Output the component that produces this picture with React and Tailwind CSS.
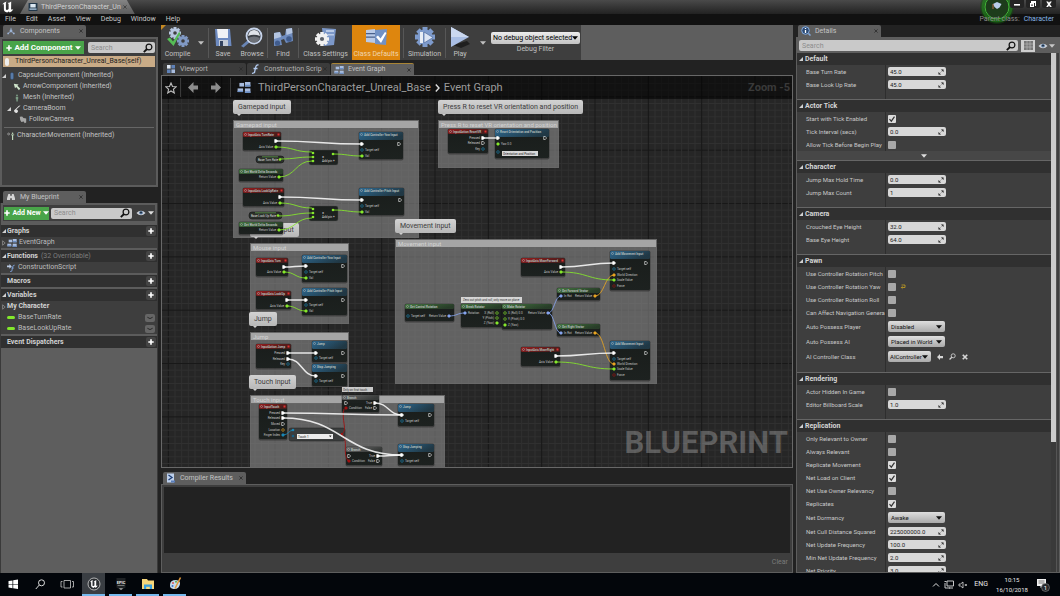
import React from 'react';
import clsx from 'clsx';

/* ---------- small shared bits ---------- */

const Caret = ({ className }) => (
  <svg viewBox="0 0 6 4" className={clsx('h-1 w-1.5 shrink-0', className)}>
    <path d="M0 0.3h6L3 3.7z" fill="currentColor" />
  </svg>
);

const Corner = () => (
  <svg viewBox="0 0 5 5" className="h-1 w-1 shrink-0 text-[#d0d0d0]">
    <path d="M5 0v5H0z" fill="currentColor" />
  </svg>
);

const Closed = () => (
  <svg viewBox="0 0 4 6" className="h-1.5 w-1 shrink-0">
    <path d="M0.6 0.8L3.2 3 0.6 5.2z" fill="none" stroke="#9a9a9a" strokeWidth="0.7" />
  </svg>
);

const Magnifier = ({ className, flip }) => (
  <svg viewBox="0 0 10 10" className={clsx('shrink-0', className || 'h-2.5 w-2.5')}>
    <g transform={flip ? 'translate(10 0) scale(-1 1)' : undefined}>
      <circle cx="4" cy="4" r="2.9" fill="none" stroke="currentColor" strokeWidth="1.2" />
      <path d="M6 6l3.2 3.2" stroke="currentColor" strokeWidth="1.8" />
    </g>
  </svg>
);

const Eye = () => (
  <svg viewBox="0 0 12 8" className="h-2 w-2.5 shrink-0">
    <path d="M0.5 4Q6-1.5 11.5 4 6 9.5 0.5 4z" fill="#cfd3da" />
    <circle cx="6" cy="3.7" r="2.2" fill="#4e6f96" />
    <circle cx="6" cy="3.5" r="0.9" fill="#10161f" />
  </svg>
);

const GraphIcon = ({ className }) => (
  <svg viewBox="0 0 14 12" className={clsx('shrink-0', className)}>
    <g fill="#a9bddf">
      <rect x="2" y="1" width="5" height="4" />
      <rect x="8" y="0" width="6" height="5" />
      <rect x="0" y="7" width="6" height="4" />
      <rect x="8" y="7" width="6" height="5" />
    </g>
    <path d="M8 3h6v2H8zM8 10h6v2H8zM0 9.5h6V11H0z" fill="#6c8fc4" />
  </svg>
);

const ViewportIcon = () => (
  <svg viewBox="0 0 10 10" className="h-2 w-2 shrink-0">
    <path d="M0 0h4.500v4.500H0z" fill="#dfe7f3" />
    <path d="M5.500 0H10v4.500H5.500zM0 5.500h4.500V10H0z" fill="#5f82b8" />
    <path d="M5.500 5.500H10V10H5.500z" fill="#a9bddf" />
  </svg>
);

const Plus = () => (
  <svg viewBox="0 0 8 8" className="h-1.5 w-1.5 shrink-0">
    <path d="M4 0.4v7.2M0.4 4h7.2" stroke="currentColor" strokeWidth="2.2" />
  </svg>
);

const SearchBox = ({ label, className }) => (
  <label className={clsx('flex min-w-0 items-center rounded-xs bg-[#c9c9c9] pr-0.5 pl-[3px] text-[#111]', className)}>
    <input
      type="search"
      aria-label={label}
      placeholder="Search"
      className="w-0 min-w-0 flex-1 bg-transparent text-[7px] text-[#222] outline-none placeholder:text-[#8d8d8d]"
    />
    <Magnifier flip />
  </label>
);

const Tab = ({ icon, active, className, children }) => (
  <div
    role="tab"
    className={clsx(
      'flex h-3 w-[83px] shrink-0 items-center rounded-t-xs px-[3px] text-[7px]',
      active ? 'bg-[#5e5e5e] text-[#c4c4c4]' : 'bg-[#3b3b3b] text-[#b4b4b4]',
      className
    )}
  >
    <span className="mr-1 flex w-2.5 shrink-0 justify-center">{icon}</span>
    <span className="flex-1 whitespace-nowrap">{children}</span>
    <button aria-label="Close tab" className="flex">
      <svg viewBox="0 0 5 5" className="h-1 w-1"><path d="M0.500 0.500l4 4M4.500 0.500l-4 4" stroke="#2b2b2b" /></svg>
    </button>
  </div>
);

/* ---------- title and menus ---------- */

const UnrealMark = ({ className }) => (
  <svg viewBox="0 0 12 12" className={className}>
    <path
      d="M0.2 3.6Q1.4 1.2 4.6 0.4 3.8 1.2 3.9 2.4V8q0.2 1 1.2 0.9L6.6 8V3.2Q6.6 2 5.6 1.9 7.8 1.6 9.2 0.4L9.1 8.3q0.6 0.8 2.3-0.6Q10.4 10.6 7.8 11.5L6.8 10.4 5.2 11.6Q2 11 1.9 8.6V3.6Q1.4 2.6 0.2 3.6z"
      fill="currentColor"
    />
  </svg>
);

const TitleBar = () => (
  <header className="relative shrink-0 overflow-hidden bg-[#111]">
    <div className="flex h-3.5 items-start justify-between bg-linear-to-b from-[#4a4a4a] to-[#222]">
      <div className="flex h-full items-center">
        <UnrealMark className="ml-0.5 h-3 w-3 text-white" />
        <div className="ml-1.5 flex h-full items-center bg-linear-to-b from-[#858585] to-[#5c5c5c] pr-2 pl-2 text-[7px] text-[#d2d2d2] [clip-path:polygon(8px_0,calc(100%-8px)_0,100%_100%,0_100%)]">
          <svg viewBox="0 0 10 9" className="mr-[3px] h-2 w-2.5 shrink-0">
            <rect width="10" height="9" fill="#23384b" />
            <path d="M2 1h6v4H2z" fill="#dce8f2" />
            <path d="M1 6h8v2H1z" fill="#8fa7bd" />
          </svg>
          <span className="whitespace-nowrap">ThirdPersonCharacter_Un</span>
          <svg viewBox="0 0 5 5" className="ml-0.5 h-1 w-1 shrink-0"><path d="M0.500 0.500l4 4M4.500 0.500l-4 4" stroke="#3a3a3a" /></svg>
        </div>
      </div>
      <div className="z-10 flex gap-0.5 pr-1 text-white">
        {[
          ['Minimise', 'M3 4h6v1.6H3z'],
          ['Restore', 'M4 1h5v5H8V3H4zM3 3h4v4H3zM4.2 4.6v1.2h1.6V4.6z'],
          ['Close', 'M3.2 1.5h1.9L6 2.8l0.9-1.3h1.9L7 4.2l1.8 2.7H6.9L6 5.6l-0.9 1.3H3.2L5 4.2z'],
        ].map(([name, d]) => (
          <button key={name} aria-label={name} className="h-2 w-3.5 rounded-b-xs bg-[#242424]">
            <svg viewBox="0 0 12 8" className="h-2 w-3.5"><path d={d} fill="currentColor" fillRule="evenodd" /></svg>
          </button>
        ))}
      </div>
    </div>
    <div className="flex h-[11px] items-center justify-between pr-1.5 pl-[5px] text-[7px]">
      <nav className="flex gap-2.5 text-[#c8c8c8]">
        {['File', 'Edit', 'Asset', 'View', 'Debug', 'Window', 'Help'].map((m) => (
          <button key={m}>{m}</button>
        ))}
      </nav>
      <p className="z-10 flex gap-1 text-[#8a8a8a]">
        Parent class: <a href="#character" className="text-[#84b5e6]">Character</a>
      </p>
    </div>
    {/* Editor performance ring */}
    <svg viewBox="0 0 36 25" className="absolute top-0 right-[45px] h-[25px] w-9">
      <circle cx="18" cy="7" r="17" fill="#174d12" opacity="0.45" />
      <circle cx="18" cy="7" r="14" fill="none" stroke="#22891c" strokeWidth="3" opacity="0.6" />
      <circle cx="18" cy="7" r="12" fill="#1d3c1b" stroke="#42b738" strokeWidth="1" />
      <path d="M14 4l4-2 4.5 2-2 3.5L18 9l-2.500-2z" fill="#b9cdea" />
      <path d="M14 4v5" stroke="#b06a48" strokeWidth="1" />
    </svg>
  </header>
);

/* ---------- left column ---------- */

const componentIcons = {
  capsule: <rect x="3" y="0.5" width="4" height="9" rx="2" fill="#587ba8" stroke="#2b4263" strokeWidth="0.5" />,
  arrow: <path d="M1 1l6 1-1.500 1.500L9 7 7.500 9 4 5 2.500 6.500z" fill="#cfe4cb" />,
  mesh: <path d="M5 0.500a1.200 1.200 0 010 2.400 1.200 1.200 0 010-2.400M3.500 3.500h3v3H6v3H4.200v-3H3.500z" fill="#7c9c85" />,
  boom: <path d="M9.500 0.500L4 5.500a2.200 2.200 0 11-1.500 3.800Q0 7 2.500 5.500L7.500 1z" fill="#e2e2e2" />,
  camera: <path d="M1 1l3-0.500 1.500 2 3.500 0.500L9 8l-2 1-1-2-3 0.500L1.500 5z" fill="#a7a7a7" />,
  movement: (
    <>
      <circle cx="2" cy="2.500" r="1.200" fill="none" stroke="#c6c6c6" strokeWidth="0.700" />
      <path d="M7 0.500a1 1 0 010 2 1 1 0 010-2M5 3h4v1H7.700v6H6.300V4H5z" fill="#c3dfbf" />
    </>
  ),
};

const ComponentRow = ({ icon, open, className, children }) => (
  <li className={clsx('flex h-[11px] items-center gap-0.5', className)}>
    {open && <Corner />}
    <svg viewBox="0 0 10 10" className="h-2 w-2 shrink-0">{componentIcons[icon]}</svg>
    <span>{children}</span>
  </li>
);

const ComponentsPanel = () => (
  <section className="shrink-0">
    <Tab
      active
      className="ml-[3px]"
      icon={
        <svg viewBox="0 0 10 10" className="h-2 w-2 shrink-0">
          <path d="M5 4V1M5 5L1.500 8M5 5l3.500 3" stroke="#9bb2d4" strokeWidth="1" />
          <circle cx="5" cy="5" r="1.800" fill="#9bb2d4" />
          <circle cx="1.500" cy="8" r="1.200" fill="#9bb2d4" />
          <circle cx="8.500" cy="8" r="1.200" fill="#9bb2d4" />
        </svg>
      }
    >
      Components
    </Tab>
    <div className="flex h-[150px] flex-col border-2 border-[#5c5c5c] bg-[#3e3e3e] text-[7px] text-[#c2c2c2]">
      <div className="flex h-[17px] shrink-0 items-center gap-1 px-px">
        <button className="flex h-[13px] w-[81px] items-center justify-center gap-0.5 bg-[#49a449] text-[8px] font-bold whitespace-nowrap text-white">
          <Plus /> Add Component <Caret className="w-1" />
        </button>
        <SearchBox label="Search components" className="h-[11px] flex-1" />
      </div>
      <div className="mx-px flex h-[11px] shrink-0 items-center gap-1.5 bg-[#c9ab86] pl-0.5 text-[#1c1c1c]">
        <span className="h-2 w-1 rounded-full bg-[#eee]" />
        ThirdPersonCharacter_Unreal_Base(self)
      </div>
      <ul className="pt-[3px]">
        <ComponentRow icon="capsule" open>CapsuleComponent (Inherited)</ComponentRow>
        <ComponentRow icon="arrow" className="pl-[11px]">ArrowComponent (Inherited)</ComponentRow>
        <ComponentRow icon="mesh" className="pl-[11px]">Mesh (Inherited)</ComponentRow>
        <ComponentRow icon="boom" open className="pl-[5px]">CameraBoom</ComponentRow>
        <ComponentRow icon="camera" className="pl-[17px]">FollowCamera</ComponentRow>
      </ul>
      <hr className="mx-0.5 my-0.5 border-[#666]" />
      <ul>
        <ComponentRow icon="movement" className="pl-[5px]">CharacterMovement (Inherited)</ComponentRow>
      </ul>
    </div>
  </section>
);

const BlueprintGroup = ({ title, note, plain, children }) => (
  <section className="border-t-2 border-[#5c5c5c] bg-[#3e3e3e]">
    <h3 className="flex h-3 items-center gap-px bg-[#303030] px-px text-[7px] font-bold text-[#d2d2d2]">
      {plain ? <span className="w-1" /> : <Corner />}
      <span>{title}</span>
      {note && <span className="pl-0.5 font-normal text-[#7e7e7e]">{note}</span>}
      <button aria-label={`Add to ${title}`} className="ml-auto flex h-2.5 w-2.5 items-center justify-center rounded-xs bg-[#444] text-white">
        <Plus />
      </button>
    </h3>
    <ul>{children}</ul>
  </section>
);

const Variable = ({ name }) => (
  <li className="flex h-[11px] items-center gap-[3px] pr-0.5 pl-1.5">
    <span className="h-[3px] w-2 rounded-full bg-[#82e82c]" />
    <span className="flex-1">{name}</span>
    <button aria-label={`Toggle ${name}`} className="flex h-2 w-2.5 items-center justify-center rounded-xs bg-[#666]">
      <svg viewBox="0 0 8 4" className="h-1 w-1.5"><path d="M0.500 1Q4 4.500 7.500 1" fill="none" stroke="#222" strokeWidth="1.200" /></svg>
    </button>
  </li>
);

const MyBlueprint = () => (
  <section className="mt-1 flex min-h-0 flex-1 flex-col">
    <Tab
      active
      className="ml-[3px]"
      icon={
        <svg viewBox="0 0 10 9" className="h-2 w-2.5 shrink-0">
          <path d="M2 1h2v2h2V1h2l1.500 5v2H6V6H4v2H0.500V6z" fill="#d5d5d5" />
        </svg>
      }
    >
      My Blueprint
    </Tab>
    <div className="flex-1 border-x border-[#3a3a3a] bg-[#5e5e5e] text-[7px] text-[#bdbdbd]">
      <div className="flex h-5 items-center gap-0.5 border-2 border-[#5c5c5c] bg-[#3e3e3e] px-px">
        <button className="flex h-[13px] w-[45px] shrink-0 items-center justify-center gap-0.5 bg-[#49a449] font-bold whitespace-nowrap text-white">
          <Plus /> Add New <Caret className="w-1" />
        </button>
        <SearchBox label="Search blueprint" className="h-[11px] w-[83px]" />
        <button aria-label="View options" className="ml-0.5 flex items-center gap-0.5 text-[#ddd]">
          <Eye /> <Caret className="w-1" />
        </button>
      </div>
      <BlueprintGroup title="Graphs">
        <li className="flex h-[11px] items-center gap-px pl-px">
          <Closed /> <GraphIcon className="mr-px h-2 w-2.5" /> EventGraph
        </li>
      </BlueprintGroup>
      <BlueprintGroup title="Functions" note="(32 Overridable)">
        <li className="flex h-[11px] items-center gap-[3px] pl-1.5">
          <svg viewBox="0 0 10 10" className="h-2 w-2 shrink-0">
            <path d="M0 2h3V0l3 3-3 3V4H0z" fill="#b9c9e2" />
            <path d="M9.500 1.500Q7.500 1 7 4L6 9 4 9.500M5.500 5h3" fill="none" stroke="#7da0d6" strokeWidth="1.200" />
          </svg>
          ConstructionScript
        </li>
      </BlueprintGroup>
      <BlueprintGroup title="Macros" plain />
      <BlueprintGroup title="Variables">
        <li className="flex h-[11px] items-center gap-px pl-px font-bold text-[#d2d2d2]"><Closed /> My Character</li>
        <Variable name="BaseTurnRate" />
        <Variable name="BaseLookUpRate" />
      </BlueprintGroup>
      <BlueprintGroup title="Event Dispatchers" plain />
    </div>
  </section>
);

/* ---------- toolbar ---------- */

const gearTeeth = (cx, cy, r) =>
  [0, 45, 90, 135].map((a) => (
    <rect key={a} x={cx - r / 4} y={cy - r} width={r / 2} height={r * 2} transform={`rotate(${a} ${cx} ${cy})`} />
  ));

const Gear = ({ cx, cy, r, fill, hole }) => (
  <g fill={fill}>
    {gearTeeth(cx, cy, r)}
    <circle cx={cx} cy={cy} r={r * 0.75} />
    <circle cx={cx} cy={cy} r={r * 0.3} fill={hole} />
  </g>
);

const toolIcons = {
  compile: (
    <>
      <Gear cx={9} cy={6} r={6} fill="#b7c6df" hole="#3e3e3e" />
      <Gear cx={17} cy={14} r={6} fill="#8099c4" hole="#3e3e3e" />
      <path d="M1 12l3-1.500 3 4L13 5l1.500 1.200L7.500 19z" fill="#56bd56" />
    </>
  ),
  save: (
    <>
      <path d="M4 2h15l1.500 17H5z" fill="#6d8ac0" />
      <path d="M6 2h11v9H7z" fill="#f0f2f6" />
      <path d="M8 13h9v6H8z" fill="#c5cbd6" />
      <path d="M9 14h3v5H9z" fill="#33425f" />
    </>
  ),
  browse: (
    <>
      <path d="M8 13L1 19l2.500 1.500L10 15z" fill="#6985b5" />
      <circle cx="14" cy="9" r="7.500" fill="#3c4046" stroke="#c7d4ea" strokeWidth="1.800" />
      <path d="M8 9q1-6 6-6t6 6q-6-2.500-12 0z" fill="#dfe3e9" />
      <path d="M8 11q6-3 12 0-2 4.500-6 4.500T8 11z" fill="#6d7178" />
    </>
  ),
  find: (
    <>
      <path d="M3 6l6-1 2 4 3-1 1-6 6-1 1 13-7 2-2-4-3 1 1 5-8 1z" fill="#6e8bbd" />
      <path d="M3 6l6-1 1 5-7 2zM15 2l6-1 0.500 5-6 2z" fill="#b4c5e1" />
      <circle cx="6.500" cy="16" r="2.600" fill="#405c8d" />
      <circle cx="18" cy="12" r="2.800" fill="#405c8d" />
    </>
  ),
  settings: (
    <>
      <path d="M8 1l14 1-2 16-10 1z" fill="#7c98c9" />
      <path d="M12 3h8v2h-8zM14 7h6v1.500h-6z" fill="#b9cae6" />
      <Gear cx={8} cy={12} r={7} fill="#f1f1f1" hole="#5b6069" />
    </>
  ),
  defaults: (
    <>
      <path d="M2 3l9-1v14l-9-1z" fill="#b9cae8" />
      <path d="M2 6h9v1.200H2zM2 9.500h9v1.200H2z" fill="#49608b" />
      <path d="M11 3l12-1-1 16-11-1z" fill="#7191c5" />
      <path d="M12 10l2-1.500 2.500 3L21 5l1.500 1-5.500 10z" fill="#fff" />
    </>
  ),
  simulation: (
    <>
      <Gear cx={12} cy={10} r={10} fill="#7e9bcc" hole="#7e9bcc" />
      <path d="M7 5h3v11H7z" fill="#e8edf5" />
      <path d="M11 5l9 5.500-9 5.500z" fill="#dce5f4" stroke="#526c9c" strokeWidth="0.700" />
    </>
  ),
  play: (
    <>
      <path d="M5 18l14-4 3 3-9 4z" fill="#1f1f1f" />
      <path d="M3 0l18 10L3 20z" fill="#a9bee4" />
      <path d="M3 0l18 10H3z" fill="#cbd8ef" />
    </>
  ),
};

const Tool = ({ icon, className, children }) => (
  <button className={clsx('flex h-full shrink-0 flex-col items-center justify-end gap-0.5 pb-0.5 text-[7px] whitespace-nowrap', className)}>
    <svg viewBox="0 0 24 21" className="h-[21px] w-6">{toolIcons[icon]}</svg>
    <span className="h-2 leading-2">{children}</span>
  </button>
);

const Divider = () => <span className="h-[30px] w-px shrink-0 bg-[#575757]" />;

const Toolbar = () => (
  <div className="flex h-[35px] shrink-0 bg-[#5e5e5e]">
    <div className="relative flex items-center bg-[#3e3e3e] text-[#c0c0c0]">
      <svg viewBox="0 0 5 5" className="absolute top-0 left-0 h-[5px] w-[5px]"><path d="M0 0h5L0 5z" fill="#c58a22" /></svg>
      <Tool icon="compile" className="w-[33px]">Compile</Tool>
      <button aria-label="Compile options" className="flex w-[14px] justify-center"><Caret className="w-1" /></button>
      <Divider />
      <Tool icon="save" className="w-[28px]">Save</Tool>
      <Tool icon="browse" className="w-[30px]">Browse</Tool>
      <Divider />
      <Tool icon="find" className="w-[30px]">Find</Tool>
      <Divider />
      <Tool icon="settings" className="w-[53px]">Class Settings</Tool>
      <Tool icon="defaults" className="w-12 bg-[#de860e] text-[#f0d6ae]">Class Defaults</Tool>
      <span className="w-[3px]" />
      <Divider />
      <Tool icon="simulation" className="w-[41px]">Simulation</Tool>
      <Divider />
      <Tool icon="play" className="w-[28px]">Play</Tool>
      <button aria-label="Play options" className="flex w-[17px] justify-center"><Caret className="w-1" /></button>
      <div className="mr-px flex flex-col items-center gap-px text-[7px]">
        <div className="relative flex items-center text-black">
          <select
            id="debug"
            className="h-3 w-[89px] appearance-none rounded-xs bg-linear-to-b from-[#ececec] to-[#c4c4c4] pl-0.5 text-[7px] outline-none"
          >
            <option>No debug object selected</option>
          </select>
          <Caret className="pointer-events-none absolute right-0.5 w-1" />
        </div>
        <label htmlFor="debug" className="h-2 leading-2">Debug Filter</label>
      </div>
    </div>
  </div>
);

/* ---------- event graph ---------- */

// Graph-space position of the canvas's top left corner
const VIEW = { x: 162, y: 76 };

const comments = [
  { title: 'Gamepad input', x: 233, y: 120, w: 186, h: 118 },
  { title: 'Press R to reset VR orientation and position', x: 438, y: 120, w: 121, h: 48 },
  { title: 'Mouse input', x: 250, y: 243, w: 99, h: 81 },
  { title: 'Jump', x: 250, y: 332, w: 99, h: 55 },
  { title: 'Touch input', x: 250, y: 395, w: 195, h: 90 },
  { title: 'Movement input', x: 395, y: 239, w: 262, h: 145 },
];

const bubbles = [
  { title: 'Gamepad input', x: 233, y: 100 },
  { title: 'Press R to reset VR orientation and position', x: 438, y: 100 },
  { title: 'Mouse input', x: 250, y: 223 },
  { title: 'Movement input', x: 395, y: 219 },
  { title: 'Jump', x: 249, y: 312 },
  { title: 'Touch input', x: 249, y: 375 },
];

const pinColors = {
  exec: '#ffffff',
  green: '#86e92c',
  cyan: '#1b86b4',
  blue: '#86a5ee',
  orange: '#e9a421',
  red: '#a01010',
};

const headColors = {
  event: '#971c1c',
  call: '#2d688f',
  pure: '#42743f',
  flow: '#6c6c6c',
};

// pins: [x, y, colour, label, outlined]
const nodes = [
  { kind: 'event', title: 'InputAxis TurnRate', x: 243, y: 132, w: 38, h: 18, pins: [[276, 141, 'exec'], [276, 147, 'green', 'Axis Value']] },
  { kind: 'pure', title: 'Get World Delta Seconds', x: 239, y: 169, w: 44, h: 12, pins: [[279, 177, 'green', 'Return Value']] },
  { kind: 'call', title: 'Add Controller Yaw Input', x: 359, y: 132, w: 44, h: 27, pins: [[362, 144, 'exec'], [399, 144, 'exec', '', 1], [362, 150, 'cyan', 'Target  self', 1], [362, 156, 'green', 'Val']] },
  { kind: 'event', title: 'InputAxis LookUpRate', x: 243, y: 188, w: 41, h: 18, pins: [[280, 197, 'exec'], [280, 203, 'green', 'Axis Value']] },
  { kind: 'pure', title: 'Get World Delta Seconds', x: 239, y: 222, w: 44, h: 12, pins: [[279, 230, 'green', 'Return Value']] },
  { kind: 'call', title: 'Add Controller Pitch Input', x: 359, y: 188, w: 45, h: 27, pins: [[362, 200, 'exec'], [400, 200, 'exec', '', 1], [362, 206, 'cyan', 'Target  self', 1], [362, 212, 'green', 'Val']] },

  { kind: 'event', title: 'InputAction ResetVR', x: 448, y: 129, w: 40, h: 24, pins: [[483, 138, 'exec', 'Pressed'], [483, 143, 'exec', 'Released', 1], [483, 149, 'cyan', 'Key', 1]] },
  { kind: 'call', title: 'Reset Orientation and Position', x: 495, y: 129, w: 54, h: 29, pins: [[498, 138, 'exec'], [545, 138, 'exec', '', 1], [498, 144, 'green', 'Yaw  0.0'], [498, 152, 'cyan', '', 1]] },

  { kind: 'event', title: 'InputAxis Turn', x: 256, y: 258, w: 32, h: 18, pins: [[284, 267, 'exec'], [284, 272, 'green', 'Axis Value']] },
  { kind: 'call', title: 'Add Controller Yaw Input', x: 302, y: 255, w: 45, h: 27, pins: [[306, 266, 'exec'], [343, 266, 'exec', '', 1], [306, 272, 'cyan', 'Target  self', 1], [306, 278, 'green', 'Val']] },
  { kind: 'event', title: 'InputAxis LookUp', x: 256, y: 291, w: 35, h: 18, pins: [[287, 300, 'exec'], [287, 306, 'green', 'Axis Value']] },
  { kind: 'call', title: 'Add Controller Pitch Input', x: 302, y: 288, w: 45, h: 27, pins: [[306, 300, 'exec'], [343, 300, 'exec', '', 1], [306, 305, 'cyan', 'Target  self', 1], [306, 311, 'green', 'Val']] },

  { kind: 'event', title: 'InputAction Jump', x: 256, y: 344, w: 35, h: 24, pins: [[288, 353, 'exec', 'Pressed'], [288, 359, 'exec', 'Released'], [288, 364, 'cyan', 'Key', 1]] },
  { kind: 'call', title: 'Jump', x: 312, y: 341, w: 35, h: 21, pins: [[316, 353, 'exec'], [343, 353, 'exec', '', 1], [316, 358, 'cyan', 'Target  self', 1]] },
  { kind: 'call', title: 'Stop Jumping', x: 312, y: 364, w: 35, h: 22, pins: [[316, 376, 'exec'], [343, 376, 'exec', '', 1], [316, 381, 'cyan', 'Target  self', 1]] },

  { kind: 'event', title: 'InputTouch', x: 259, y: 404, w: 28, h: 35, pins: [[283, 413, 'exec', 'Pressed'], [283, 418, 'exec', 'Released'], [283, 424, 'exec', 'Moved', 1], [283, 430, 'orange', 'Location', 1], [283, 435, 'cyan', 'Finger Index']] },
  { kind: 'flow', title: 'Branch', x: 342, y: 395, w: 37, h: 17, pins: [[346, 403, 'exec', '', 1], [375, 403, 'exec', 'True'], [346, 408, 'red', 'Condition'], [375, 408, 'exec', 'False', 1]] },
  { kind: 'flow', title: 'Branch', x: 346, y: 447, w: 36, h: 18, pins: [[349, 456, 'exec', '', 1], [378, 456, 'exec', 'True'], [349, 461, 'red', 'Condition'], [378, 461, 'exec', 'False', 1]] },
  { kind: 'call', title: 'Jump', x: 398, y: 404, w: 36, h: 22, pins: [[402, 415, 'exec'], [430, 415, 'exec', '', 1], [402, 421, 'cyan', 'Target  self', 1]] },
  { kind: 'call', title: 'Stop Jumping', x: 398, y: 444, w: 36, h: 21, pins: [[402, 455, 'exec'], [430, 455, 'exec', '', 1], [402, 461, 'cyan', 'Target  self', 1]] },

  { kind: 'pure', title: 'Get Control Rotation', x: 405, y: 304, w: 49, h: 17, pins: [[408, 316, 'cyan', 'Target  self', 1], [449, 316, 'blue', 'Return Value']] },
  { kind: 'pure', title: 'Break Rotator', x: 461, y: 304, w: 41, h: 23, pins: [[465, 313, 'blue', 'Rotation'], [497, 313, 'green', 'X (Roll)', 1], [497, 318, 'green', 'Y (Pitch)', 1], [497, 323, 'green', 'Z (Yaw)']] },
  { kind: 'pure', title: 'Make Rotator', x: 502, y: 304, w: 50, h: 25, pins: [[505, 313, 'green', 'X (Roll)  0.0', 1], [505, 319, 'green', 'Y (Pitch)  0.0', 1], [505, 325, 'green', 'Z (Yaw)'], [548, 313, 'blue', 'Return Value']] },
  { kind: 'pure', title: 'Get Forward Vector', x: 557, y: 288, w: 43, h: 12, pins: [[561, 296, 'blue', 'In Rot'], [595, 296, 'orange', 'Return Value']] },
  { kind: 'pure', title: 'Get Right Vector', x: 557, y: 324, w: 43, h: 12, pins: [[561, 333, 'blue', 'In Rot'], [595, 333, 'orange', 'Return Value']] },
  { kind: 'event', title: 'InputAxis MoveForward', x: 521, y: 258, w: 44, h: 18, pins: [[561, 267, 'exec'], [561, 272, 'green', 'Axis Value']] },
  { kind: 'event', title: 'InputAxis MoveRight', x: 521, y: 347, w: 39, h: 19, pins: [[556, 356, 'exec'], [556, 362, 'green', 'Axis Value']] },
  { kind: 'call', title: 'Add Movement Input', x: 610, y: 251, w: 40, h: 39, pins: [[614, 263, 'exec'], [646, 263, 'exec', '', 1], [614, 269, 'cyan', 'Target  self', 1], [614, 275, 'orange', 'World Direction'], [614, 280, 'green', 'Scale Value'], [614, 286, 'red', 'Force', 1]] },
  { kind: 'call', title: 'Add Movement Input', x: 610, y: 341, w: 40, h: 39, pins: [[614, 353, 'exec'], [646, 353, 'exec', '', 1], [614, 359, 'cyan', 'Target  self', 1], [614, 364, 'orange', 'World Direction'], [614, 369, 'green', 'Scale Value'], [614, 375, 'red', 'Force', 1]] },
];

const wires = [
  ['exec', 276, 141, 362, 144], ['green', 276, 147, 312, 152], ['green', 280, 159, 312, 157],
  ['green', 279, 177, 312, 161], ['green', 333, 154, 362, 156],
  ['exec', 280, 197, 362, 200], ['green', 280, 203, 312, 208], ['green', 278, 216, 312, 213],
  ['green', 279, 230, 312, 218], ['green', 333, 210, 362, 212],
  ['exec', 483, 138, 498, 138],
  ['exec', 284, 267, 306, 266], ['green', 284, 272, 306, 278],
  ['exec', 287, 300, 306, 300], ['green', 287, 306, 306, 311],
  ['exec', 288, 353, 316, 353], ['exec', 288, 359, 316, 376],
  ['exec', 283, 413, 402, 415], ['exec', 283, 418, 402, 455],
  ['exec', 375, 403, 402, 415], ['exec', 378, 456, 402, 455], ['cyan', 283, 435, 294, 430],
  ['blue', 449, 316, 465, 313], ['blue', 548, 313, 561, 296], ['blue', 548, 313, 561, 333],
  ['orange', 595, 296, 614, 275], ['orange', 595, 333, 614, 364],
  ['exec', 561, 267, 614, 263], ['green', 561, 272, 614, 280],
  ['exec', 556, 356, 614, 353], ['green', 556, 362, 614, 369],
];

const Wire = ({ wire: [color, x1, y1, x2, y2] }) => {
  const bend = (x2 - x1) / 2;
  return (
    <path
      d={`M${x1} ${y1}C${x1 + bend} ${y1} ${x2 - bend} ${y2} ${x2} ${y2}`}
      fill="none"
      stroke={pinColors[color]}
      strokeWidth={color === 'exec' ? 1.5 : 1}
      opacity="0.85"
    />
  );
};

const Pin = ({ x, y, color, outlined }) => {
  const paint = { fill: outlined ? 'none' : pinColors[color], stroke: pinColors[color], strokeWidth: 0.6 };
  return color === 'exec' ? (
    <path d={`M${x - 1.3} ${y - 1.5}h1.400l1.600 1.500-1.600 1.500h-1.400z`} {...paint} />
  ) : (
    <circle cx={x} cy={y} r="1.300" {...paint} />
  );
};

const Node = ({ kind, title, x, y, w, h, pins }) => {
  const head = kind === 'call' && h > 20 ? 8 : 5;
  return (
    <g>
      <rect x={x - 0.5} y={y - 0.5} width={w + 1} height={h + 2} rx="2" fill="#000" opacity="0.35" />
      <rect x={x} y={y} width={w} height={h} rx="1.500" fill="url(#body)" />
      <rect x={x} y={y} width={w} height={head} rx="1.500" fill={`url(#${kind})`} />
      <circle cx={x + 2.5} cy={y + 2.5} r="1" fill="none" stroke="#bbb" strokeWidth="0.500" />
      <text x={x + 5} y={y + 3.8} fontSize="3" fontWeight="700" fill="#b4beba">{title}</text>
      {kind === 'event' && <rect x={x + w - 3.5} y={y + 1.5} width="2" height="2" fill="#e03030" />}
      {pins.map(([px, py, color, label, outlined]) => {
        const right = px > x + w / 2;
        return (
          <g key={`${px}-${py}`}>
            <Pin x={px} y={py} color={color} outlined={outlined} />
            {label && (
              <text x={right ? px - 3 : px + 3} y={py + 1} fontSize="3" fill="#c4c4c4" textAnchor={right ? 'end' : 'start'}>
                {label}
              </text>
            )}
          </g>
        );
      })}
    </g>
  );
};

const VariablePill = ({ x, y, w, children }) => (
  <g>
    <rect x={x} y={y} width={w} height="7" rx="3" fill="#2b302b" stroke="#141414" strokeWidth="0.600" />
    <path d={`M${x + 6} ${y + 0.8}h${w - 12}`} stroke="#5f9a4d" strokeWidth="0.800" />
    <text x={x + w - 6} y={y + 4.6} fontSize="3" fill="#ddd" textAnchor="end">{children}</text>
    <circle cx={x + w - 4} cy={y + 3.5} r="1.300" fill="#86e92c" />
  </g>
);

const Multiply = ({ x, y }) => (
  <g>
    <rect x={x} y={y} width="29" height="15" rx="2" fill="url(#body)" stroke="#4b4b4b" strokeWidth="0.400" />
    {[3, 7, 11].map((dy) => <circle key={dy} cx={x + 4} cy={y + dy} r="1.300" fill="#86e92c" />)}
    <circle cx={x + 24} cy={y + 4} r="1.300" fill="#86e92c" />
    <text x={x + 13} y={y + 8} fontSize="4" fill="#ddd">×</text>
    <text x={x + 13} y={y + 12} fontSize="3" fill="#ddd">Add pin +</text>
  </g>
);

const GridLines = () => {
  const step = 20 / 3;
  return (
    <>
      {Array.from({ length: 200 }, (_, i) => (
        <path
          key={i}
          d={`M${115 + i * step} 0v900${i < 100 ? `M0 ${43.5 + i * step}h1800` : ''}`}
          stroke={i % 8 === 0 ? '#181818' : '#303030'}
        />
      ))}
    </>
  );
};

const Bubble = ({ title, x, y }) => (
  <div
    className="absolute flex h-3.5 items-center rounded-xs bg-linear-to-b from-[#d2d2d2] to-[#b8b8b8] px-[5px] text-[7px] whitespace-nowrap text-[#3c3c3c] after:absolute after:top-3.5 after:left-1 after:border-x-2 after:border-t-2 after:border-x-transparent after:border-t-[#d0d0d0]"
    style={{ left: x - VIEW.x, top: y - VIEW.y }}
  >
    {title}
  </div>
);

const EventGraph = () => (
  <div className="relative min-h-0 flex-1 overflow-hidden border border-[#686868] bg-[#262626]">
    <svg className="absolute inset-0 h-full w-full">
      <g transform={`translate(${-VIEW.x} ${-VIEW.y})`}><GridLines /></g>
    </svg>
    {comments.map((c) => (
      <div
        key={c.title}
        className="absolute overflow-hidden border border-[#6a6a6a]/60 bg-[#8a8a8a]/60 text-[6px] whitespace-nowrap text-[#d4d4d4]"
        style={{ left: c.x - VIEW.x, top: c.y - VIEW.y, width: c.w, height: c.h }}
      >
        <h4 className="h-[7px] bg-[#a5a5a5] pl-0.5 leading-[7px]">{c.title}</h4>
      </div>
    ))}
    {bubbles.map((b) => <Bubble key={b.title} {...b} />)}
    <p className="absolute right-1 bottom-1.5 text-[31px] leading-9 font-bold text-white/25">BLUEPRINT</p>
    <svg className="absolute inset-0 h-full w-full">
      <defs>
        <linearGradient id="body" x2="0" y2="1">
          <stop offset="0" stopColor="#171b19" stopOpacity="0.95" />
          <stop offset="1" stopColor="#1b201e" stopOpacity="0.95" />
        </linearGradient>
        {Object.entries(headColors).map(([kind, color]) => (
          <linearGradient key={kind} id={kind} x2="1" y2="0.400">
            <stop offset="0" stopColor={color} />
            <stop offset="1" stopColor={color} stopOpacity="0.350" />
          </linearGradient>
        ))}
      </defs>
      <g transform={`translate(${-VIEW.x} ${-VIEW.y})`}>
        {nodes.map((n) => <Node key={`${n.x}-${n.y}`} {...n} />)}
        <VariablePill x={256} y={156} w={28}>Base Turn Rate</VariablePill>
        <VariablePill x={249} y={212} w={33}>Base Look Up Rate</VariablePill>
        <Multiply x={309} y={150} />
        <Multiply x={309} y={206} />
        {/* Touch index comparison */}
        <rect x="289" y="428" width="56" height="13" rx="2" fill="#3a3d3d" stroke="#222" strokeWidth="0.500" />
        <rect x="297" y="434" width="36" height="5" fill="#ececec" />
        <text x="298" y="437.600" fontSize="3" fill="#222">Touch 1</text>
        <path d="M329 435.500h2.500l-1.200 1.800z" fill="#222" />
        <circle cx="293" cy="430" r="1.300" fill="#1b86b4" />
        <circle cx="293" cy="436" r="1.300" fill="#1b5f84" />
        <circle cx="342" cy="434" r="1.300" fill="#a01010" />
        <path d="M342 434C348 430 341 420 344 409M342 434C349 442 342 452 348 461" fill="none" stroke="#9c1414" strokeWidth="0.900" />
        <rect x="502" y="151" width="36" height="5" fill="#d8d8d8" />
        <text x="503" y="154.600" fontSize="3" fill="#222">Orientation and Position</text>
        <rect x="342" y="387" width="31" height="5" fill="#c9c9c9" />
        <text x="343" y="390.600" fontSize="3" fill="#333">Only on first touch</text>
        <rect x="461" y="297" width="61" height="6" fill="#d5d5d5" />
        <text x="463" y="301" fontSize="3" fill="#333">Zero out pitch and roll, only move on plane</text>
        {wires.map((w) => <Wire key={w.join()} wire={w} />)}
      </g>
    </svg>
    <div className="relative flex h-[23px] items-center bg-black/55 pr-0.5 pl-[3px] text-[11px] whitespace-nowrap text-[#9c9c9c]">
      <button aria-label="Favourite">
        <svg viewBox="0 0 12 12" className="h-3 w-3">
          <path d="M6 1l1.500 3.500 3.700 0.300-2.800 2.500 0.900 3.700L6 9l-3.300 2 0.900-3.700L0.800 4.800l3.700-0.300z" fill="none" stroke="#bdbdbd" strokeWidth="1.100" />
        </svg>
      </button>
      <span className="mx-[3px] h-[19px] w-px bg-[#3a3a3a]" />
      <button aria-label="Back" className="mx-1">
        <svg viewBox="0 0 10 12" className="h-[13px] w-2.5"><path d="M0 6l5.500-5.500V4H10v4H5.500v3.500z" fill="#8d8d8d" /></svg>
      </button>
      <button aria-label="Forward" className="mx-[9px]">
        <svg viewBox="0 0 10 12" className="h-[13px] w-2.5"><path d="M10 6L4.500 0.500V4H0v4h4.500v3.500z" fill="#8d8d8d" /></svg>
      </button>
      <span className="mr-[3px] h-[19px] w-px bg-[#3a3a3a]" />
      <GraphIcon className="mr-[7px] ml-[3px] h-[11px] w-3.5" />
      <span>ThirdPersonCharacter_Unreal_Base</span>
      <svg viewBox="0 0 5 8" className="mx-1 h-2 w-[5px]"><path d="M0.800 0.500L4 4 0.800 7.500" fill="none" stroke="#ddd" strokeWidth="1.400" /></svg>
      <span>Event Graph</span>
      <span className="ml-auto font-bold text-[#3a3a3a]">Zoom -5</span>
    </div>
  </div>
);

const scriptIcon = (
  <svg viewBox="0 0 10 10" className="h-2.5 w-2.5 shrink-0">
    <path d="M8.500 1Q6 0.500 5.500 4L4.500 8.500 2 9.500M3.500 4.500h4" fill="none" stroke="#b3cbf0" strokeWidth="1.300" />
  </svg>
);

const CompilerResults = () => (
  <section className="mt-1 flex h-[101px] shrink-0 flex-col">
    <Tab
      active
      className="ml-0.5"
      icon={
        <svg viewBox="0 0 10 10" className="h-2.5 w-2.5 shrink-0">
          <rect x="1" y="0.500" width="7" height="9" fill="#bdd0ec" />
          <path d="M2.500 2l3.500 2.500L2.500 7" fill="none" stroke="#1e3d74" strokeWidth="1.300" />
          <path d="M5 7.500h4v2H5z" fill="#5a7ebb" />
        </svg>
      }
    >
      Compiler Results
    </Tab>
    <div className="flex flex-1 flex-col border border-[#5e5e5e] bg-[#3e3e3e] px-0.5 pt-0.5">
      <div className="flex-1 bg-[#222]" />
      <button className="h-[19px] self-end pr-0.5 text-[7px] text-[#7a7a7a]">Clear</button>
    </div>
  </section>
);

/* ---------- details ---------- */

const NumberBox = ({ id, value }) => (
  <span className="flex h-[9px] w-[58px] items-center rounded-xs bg-[#d8d8d8] px-0.5 text-[#222]">
    <input id={id} defaultValue={value} className="w-0 flex-1 bg-transparent text-[6px] outline-none" />
    <svg viewBox="0 0 6 6" className="h-1.5 w-1.5 shrink-0">
      <path d="M3 0.500h2.500V3zM3 5.500H0.500V3z" fill="#111" />
      <path d="M1.500 4.500l3-3" stroke="#888" strokeWidth="0.500" />
    </svg>
  </span>
);

const CheckBox = ({ id, checked }) => (
  <span className="relative flex">
    <input id={id} type="checkbox" defaultChecked={checked} className="peer h-2 w-2 appearance-none rounded-[1px] bg-[#a8a8a8] checked:bg-[#dcdcdc]" />
    <svg viewBox="0 0 8 8" className="pointer-events-none absolute inset-0 hidden h-2 w-2 peer-checked:block">
      <path d="M1.500 4.200l1.800 2L6.500 1.600" fill="none" stroke="#333" strokeWidth="1.200" />
    </svg>
  </span>
);

const DropDown = ({ id, value, short }) => (
  <span className="relative flex items-center text-[#111]">
    <select
      id={id}
      className={clsx(
        'h-[11px] appearance-none rounded-xs bg-linear-to-b from-[#dedede] to-[#aaa] text-[6px] outline-none',
        short ? 'w-[43px] pl-0.5' : 'w-[57px] pl-[3px]'
      )}
    >
      <option>{value}</option>
    </select>
    <Caret className="pointer-events-none absolute right-[3px] w-1" />
  </span>
);

const sections = [
  { name: 'Default', rows: [['Base Turn Rate', '45.0'], ['Base Look Up Rate', '45.0']] },
  { name: 'Actor Tick', more: true, rows: [['Start with Tick Enabled', true], ['Tick Interval (secs)', '0.0'], ['Allow Tick Before Begin Play', false]] },
  { name: 'Character', rows: [['Jump Max Hold Time', '0.0'], ['Jump Max Count', '1']] },
  { name: 'Camera', rows: [['Crouched Eye Height', '32.0'], ['Base Eye Height', '64.0']] },
  {
    name: 'Pawn',
    rows: [
      ['Use Controller Rotation Pitch', false],
      ['Use Controller Rotation Yaw', false, 'reset'],
      ['Use Controller Rotation Roll', false],
      ['Can Affect Navigation Genera', false],
      ['Auto Possess Player', 'Disabled', 'select'],
      ['Auto Possess AI', 'Placed in World', 'select'],
      ['AI Controller Class', 'AIController', 'class'],
    ],
  },
  { name: 'Rendering', rows: [['Actor Hidden In Game', false], ['Editor Billboard Scale', '1.0']] },
  {
    name: 'Replication',
    rows: [
      ['Only Relevant to Owner', false],
      ['Always Relevant', false],
      ['Replicate Movement', true],
      ['Net Load on Client', true],
      ['Net Use Owner Relevancy', false],
      ['Replicates', true],
      ['Net Dormancy', 'Awake', 'select'],
      ['Net Cull Distance Squared', '225000000.0'],
      ['Net Update Frequency', '100.0'],
      ['Min Net Update Frequency', '2.0'],
      ['Net Priority', '3.0'],
    ],
  },
];

const Property = ({ label, value, kind }) => {
  const id = label.toLowerCase().replace(/\W+/g, '-');
  const dropdown = kind === 'select' || kind === 'class';
  return (
    <div className={clsx('flex', dropdown ? 'h-[15px]' : 'h-[13px]')}>
      <label htmlFor={id} className="flex w-[89px] shrink-0 items-center overflow-hidden border-r border-[#2e2e2e] pl-[9px] whitespace-nowrap">
        {label}
      </label>
      <div className="flex items-center pl-0.5">
        {dropdown && <DropDown id={id} value={value} short={kind === 'class'} />}
        {!dropdown && typeof value === 'boolean' && <CheckBox id={id} checked={value} />}
        {!dropdown && typeof value === 'string' && <NumberBox id={id} value={value} />}
        {kind === 'reset' && (
          <button aria-label="Reset to default" className="ml-1">
            <svg viewBox="0 0 6 6" className="h-1.5 w-1.5"><path d="M1.500 1h3.500v2.500H1.500M2.500 2.300L1.300 3.500l1.200 1.200" fill="none" stroke="#d8ae1c" strokeWidth="0.700" /></svg>
          </button>
        )}
        {kind === 'class' && (
          <div className="flex items-center gap-1.5 pl-1.5 text-[#d6d6d6]">
            <button aria-label="Use selected"><svg viewBox="0 0 8 8" className="h-1.5 w-1.5"><path d="M0 4l4-4v2.500h4v3H4V8z" fill="currentColor" /></svg></button>
            <button aria-label="Browse to class"><Magnifier flip className="h-[7px] w-[7px]" /></button>
            <button aria-label="Clear class"><svg viewBox="0 0 8 8" className="h-1.5 w-1.5"><path d="M1 1l6 6M7 1L1 7" stroke="currentColor" strokeWidth="2.200" /></svg></button>
          </div>
        )}
      </div>
    </div>
  );
};

const DetailsPanel = () => (
  <aside className="flex w-[264px] shrink-0 flex-col">
    <Tab
      active
      className="ml-0.5"
      icon={
        <svg viewBox="0 0 10 10" className="h-2.5 w-2.5 shrink-0">
          <circle cx="4.500" cy="4.500" r="3.800" fill="#2c4a73" stroke="#83aade" strokeWidth="1" />
          <path d="M4.500 2v1M4.500 4v3" stroke="#fff" strokeWidth="1.300" />
          <path d="M7.500 7.500L9.500 9.500" stroke="#83aade" strokeWidth="1.500" />
        </svg>
      }
    >
      Details
    </Tab>
    <div className="flex min-h-0 flex-1 flex-col border border-[#5e5e5e] bg-[#5e5e5e] text-[6px] text-[#c8c8c8]">
      <div className="flex h-[15px] shrink-0 items-center gap-[3px] pr-1 pl-0.5">
        <SearchBox label="Search details" className="h-[11px] flex-1" />
        <button aria-label="Property matrix" className="flex h-3 w-3.5 items-center justify-center bg-[#cfcfcf]">
          <svg viewBox="0 0 9 9" className="h-[9px] w-[9px]"><path d="M0 0h9v9H0z" fill="#777" /><path d="M0 3h9M0 6h9M3 0v9M6 0v9" stroke="#b5b5b5" strokeWidth="0.700" /></svg>
        </button>
        <button aria-label="View options" className="flex items-center gap-px"><Eye /><Caret className="w-1" /></button>
      </div>
      <div className="flex min-h-0 flex-1 bg-[#3e3e3e]">
        <div className="min-w-0 flex-1 overflow-hidden">
          {sections.map((s) => (
            <section key={s.name} className="border-b border-[#666]">
              <h3 className="flex h-3 items-center gap-0.5 bg-[#303030] pl-0.5 text-[7px] font-bold text-[#d6d6d6]">
                <Corner /> {s.name}
              </h3>
              {s.rows.map(([label, value, kind]) => (
                <Property key={label} label={label} value={value} kind={kind} />
              ))}
              {s.more ? (
                <button aria-label="Show advanced" className="flex h-[9px] w-full items-center justify-center bg-[#474747] text-[#ddd]"><Caret /></button>
              ) : (
                <div className="h-2 w-[89px] border-r border-[#2e2e2e]" />
              )}
            </section>
          ))}
        </div>
        <div className="mr-0.5 w-1.5 border-r border-[#555] bg-[#3a3a3a]">
          <div className="h-3/4 bg-[#cbcbcb]" />
        </div>
      </div>
    </div>
  </aside>
);

/* ---------- desktop taskbar ---------- */

const TaskButton = ({ name, active, running, children }) => (
  <button
    aria-label={name}
    className={clsx(
      'flex h-full w-[23px] items-center justify-center border-b-2',
      active && 'bg-[#3a3e43]',
      running ? 'border-[#76b9ed]' : 'border-transparent'
    )}
  >
    <svg viewBox="0 0 14 14" className="h-3.5 w-3.5">{children}</svg>
  </button>
);

const Taskbar = () => (
  <footer className="flex h-[23px] shrink-0 items-center justify-between bg-[#03060b] text-[#e8e8e8]">
    <div className="flex h-full gap-1 pl-px">
      <TaskButton name="Start"><path d="M2.500 4L6.500 3.400V7H2.500zM7.200 3.300L12 2.500V7H7.200zM2.500 7.600H6.500V11.200L2.500 10.600zM7.200 7.600H12V12L7.200 11.300z" fill="#fff" /></TaskButton>
      <TaskButton name="Search"><circle cx="8.500" cy="5.800" r="3" fill="none" stroke="#ddd" /><path d="M6.300 8L2.800 12" stroke="#ddd" /></TaskButton>
      <TaskButton name="Task view"><path d="M4 3.500h6.500v7.500H4zM2.500 4.500h-1.500v5.500h1.500M12 4.500h1.500v5.500H12" fill="none" stroke="#ccc" strokeWidth="0.800" /></TaskButton>
      <TaskButton name="Unreal Editor" active running>
        <circle cx="7" cy="7" r="6" fill="#2b2e31" stroke="#d0d0d0" strokeWidth="0.800" />
        <g transform="translate(2.800 2.800) scale(0.7)">
          <path d="M0.200 3.600Q1.400 1.200 4.600 0.400 3.800 1.200 3.900 2.400V8q0.200 1 1.200 0.900L6.600 8V3.200Q6.600 2 5.600 1.900 7.800 1.600 9.200 0.400L9.100 8.300q0.600 0.800 2.300-0.600Q10.400 10.600 7.800 11.500L6.800 10.400 5.200 11.600Q2 11 1.900 8.600V3.600Q1.400 2.600 0.200 3.600z" fill="#fff" />
        </g>
      </TaskButton>
      <TaskButton name="Epic Games Launcher" running>
        <path d="M2.500 1h9v9.500L7 13.500l-4.500-3z" fill="#1e2124" />
        <text x="7" y="6.500" fontSize="4" fontWeight="700" textAnchor="middle" fill="#e5e5e5">EPIC</text>
        <path d="M3.500 8.500h7M5.500 11.500h3L7 12.700z" stroke="#999" strokeWidth="0.700" fill="#999" />
      </TaskButton>
      <TaskButton name="File Explorer" running>
        <path d="M1 2h5l1 1.500h6V12H1z" fill="#f7d77b" />
        <path d="M3 12V7.500h8V12H8.800V9.800H5.200V12z" fill="#3aa0de" />
      </TaskButton>
      <TaskButton name="Paint" running>
        <path d="M2 8q0-5 6-5 4.500 0.500 4 4-1 5.500-6.500 5Q1.500 11.500 2 8z" fill="#c3d9ea" />
        <circle cx="5" cy="6" r="1" fill="#d95454" /><circle cx="8" cy="4.800" r="1" fill="#5fae4a" /><circle cx="4.500" cy="9" r="1" fill="#3f74c8" />
        <path d="M12.500 0.500L7 11.500" stroke="#e49a3a" strokeWidth="1.500" />
      </TaskButton>
    </div>
    <div className="flex items-center gap-1 pr-2.5 text-[7px]">
      <svg viewBox="0 0 8 8" className="h-2 w-2"><path d="M1 5.500l3-3 3 3" fill="none" stroke="#e0e0e0" strokeWidth="1" /></svg>
      <svg viewBox="0 0 10 9" className="h-[9px] w-2.5"><path d="M3 1h6.500v5H3zM1 3v5h5M5 8h4M0.500 1.500h2" fill="none" stroke="#ddd" strokeWidth="0.900" /></svg>
      <svg viewBox="0 0 10 8" className="h-2 w-2.5"><path d="M1 3h1.500L5 1v6L2.500 5H1zM6.800 3l2 2M8.800 3l-2 2" fill="none" stroke="#ddd" strokeWidth="0.800" /></svg>
      <span className="pl-0.5">ENG</span>
      <p className="ml-1 flex flex-col items-center text-[6px] leading-[10px] whitespace-nowrap"><span>10:15</span><span>16/10/2018</span></p>
      <button aria-label="Notifications" className="ml-1">
        <svg viewBox="0 0 14 14" className="h-3.5 w-3.5">
          <path d="M1 1h9v7H6.500L4.500 10V8H1z" fill="#f2f2f2" />
          <path d="M2.500 3h6M2.500 5h6" stroke="#444" strokeWidth="0.700" />
          <circle cx="9.500" cy="9.500" r="4" fill="#26282b" stroke="#8a8a8a" strokeWidth="0.600" />
          <text x="9.500" y="11.800" fontSize="6" textAnchor="middle" fill="#fff">1</text>
        </svg>
      </button>
    </div>
  </footer>
);

export default function App() {
  return (
    <div className="flex h-screen flex-col overflow-hidden bg-[#222] font-[Roboto,sans-serif] leading-none">
      <TitleBar />
      <main className="flex min-h-0 flex-1 gap-[3px]">
        <aside className="flex w-[158px] shrink-0 flex-col">
          <ComponentsPanel />
          <MyBlueprint />
        </aside>
        <div className="flex min-w-0 flex-1 flex-col">
          <Toolbar />
          <div role="tablist" className="flex h-[15px] shrink-0 items-end gap-px pl-0.5">
            <Tab icon={<ViewportIcon />}>Viewport</Tab>
            <Tab icon={scriptIcon}>Construction Scrip</Tab>
            <Tab active className="border-t border-[#a88434]" icon={<GraphIcon className="h-2 w-2.5" />}>Event Graph</Tab>
          </div>
          <EventGraph />
          <CompilerResults />
        </div>
        <DetailsPanel />
      </main>
      <Taskbar />
    </div>
  );
}
